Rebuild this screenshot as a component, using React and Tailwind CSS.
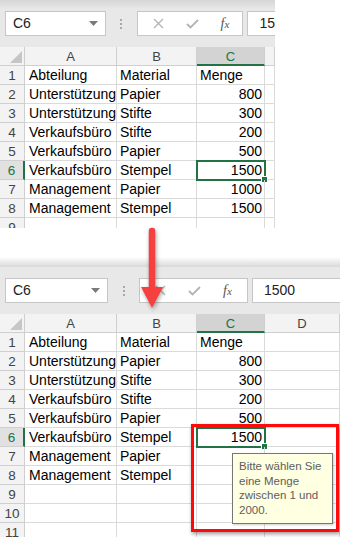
import React from 'react';

const ROWS = [
  ['Abteilung', 'Material', 'Menge'],
  ['Unterstützung', 'Papier', '800'],
  ['Unterstützung', 'Stifte', '300'],
  ['Verkaufsbüro', 'Stifte', '200'],
  ['Verkaufsbüro', 'Papier', '500'],
  ['Verkaufsbüro', 'Stempel', '1500'],
  ['Management', 'Papier', '1000'],
  ['Management', 'Stempel', '1500'],
];

const font = { fontFamily: '"Liberation Sans", Arial, sans-serif' };

const Toolbar = ({ value, top }) => (
  <div className={`h-[47px] relative flex items-start pt-[11px] ${top ? 'bg-[linear-gradient(to_bottom,#d6d6d6,#e8e8e8_9px)]' : 'bg-[#e8e8e8]'}`}>
    {/* name box */}
    <div className="ml-[5px] w-[103px] h-[25px] bg-white border border-[#c6c6c6] flex items-center justify-between pl-[7px] pr-[7px]">
      <span className="text-[14px] text-[#222]">C6</span>
      <svg width="9" height="5" viewBox="0 0 9 5"><polygon points="0,0 9,0 4.5,5" fill="#7a7a7a" /></svg>
    </div>
    {/* dots */}
    <div className="w-[31px] h-[25px] flex flex-col items-center justify-center gap-[2px]">
      <span className="w-[2px] h-[2px] bg-[#a8a8a8]" />
      <span className="w-[2px] h-[2px] bg-[#a8a8a8]" />
      <span className="w-[2px] h-[2px] bg-[#a8a8a8]" />
    </div>
    {/* cancel / enter / fx */}
    <div className="w-[109px] h-[25px] bg-white border border-[#c6c6c6] flex items-center">
      <svg className="ml-[15px]" width="11" height="11" viewBox="0 0 11 11">
        <path d="M1 1 L10 10 M10 1 L1 10" stroke="#b4b4b4" strokeWidth="1.3" />
      </svg>
      <svg className="ml-[22px]" width="13" height="10" viewBox="0 0 13 10">
        <path d="M1 5 L4.5 8.5 L12 1" stroke="#b4b4b4" strokeWidth="1.8" fill="none" />
      </svg>
      <span className="ml-[22px] text-[14px] italic text-[#555]" style={{ fontFamily: '"Liberation Serif", serif' }}>f<span className="text-[11px]">x</span></span>
    </div>
    {/* formula input */}
    <div className="ml-[4px] flex-1 h-[25px] bg-white border border-r-0 border-[#c6c6c6] flex items-center pl-[11px]">
      <span className="text-[14px] text-[#222]">{value}</span>
    </div>
  </div>
);

const Sheet = ({ rows, showD, hideFrom }) => {
  const cell = 'h-[19px] border-r border-b border-[#dadada] text-[14px] leading-[19px] text-black whitespace-nowrap overflow-hidden';
  const head = 'h-[19px] border-r border-b border-[#cfcfcf] bg-[#f3f3f3] text-[13px] leading-[19px] text-[#444] text-center';
  const lines = [];
  for (let i = 0; i < rows; i++) lines.push(ROWS[i] || ['', '', '']);
  return (
    <div className="grid grid-cols-[25px_92px_80px_68px_1fr] bg-white">
      <div className="h-[19px] border-r border-b border-[#cfcfcf] bg-[#f3f3f3] flex items-end justify-end p-[2px]">
        <svg width="12" height="12" viewBox="0 0 12 12"><polygon points="12,0 12,12 0,12" fill="#c6c6c6" /></svg>
      </div>
      <div className={head}>A</div>
      <div className={head}>B</div>
      <div className="h-[19px] border-r border-[#cfcfcf] border-b-2 border-b-[#217346] bg-[#d3d3d3] text-[13px] leading-[19px] text-[#217346] text-center">C</div>
      <div className={head}>{showD ? 'D' : ''}</div>
      {lines.map((r, i) => {
        const sel = i === 5;
        const num = /^\d+$/.test(r[2]);
        const val = hideFrom && i >= hideFrom ? '' : r[2];
        return (
          <React.Fragment key={i}>
            <div className={`h-[19px] border-b border-[#cfcfcf] text-[13.5px] leading-[19px] text-center ${sel ? 'bg-[#e1e1e1] text-[#217346] border-r-2 border-r-[#217346]' : 'bg-[#f3f3f3] text-[#444] border-r'}`}>{i + 1}</div>
            <div className={`${cell} pl-[4px]`}>{r[0]}</div>
            <div className={`${cell} pl-[3px]`}>{r[1]}</div>
            <div className={`${cell} relative overflow-visible ${num ? 'pr-[2px] text-right' : 'pl-[3px]'}`}>
              {val}
              {sel && (
                <>
                  <div className="absolute left-[-1px] top-[-1px] right-[-2px] bottom-[-2px] border-2 border-[#217346]" />
                  <div className="absolute right-[-4px] bottom-[-4px] w-[5px] h-[5px] bg-[#217346] border border-white box-content" />
                </>
              )}
            </div>
            <div className={cell} />
          </React.Fragment>
        );
      })}
    </div>
  );
};

export default function App() {
  return (
    <div className="w-[340px] h-[537px] relative overflow-hidden bg-white" style={font}>
      {/* before */}
      <div className="w-[275px] h-[228px] overflow-hidden">
        <Toolbar value="15" top />
        <Sheet rows={9} showD={false} />
      </div>

      {/* after */}
      <div className="mt-[29px]">
        <div className="h-[10px] bg-[linear-gradient(to_bottom,#ffffff,#d8d8d8)]" />
        <Toolbar value="1500" />
        <Sheet rows={11} showD hideFrom={6} />
      </div>

      {/* arrow */}
      <svg className="absolute left-[138px] top-[224px]" width="30" height="90" viewBox="0 0 30 90" style={{ filter: 'drop-shadow(1px 2px 2px rgba(0,0,0,0.35))' }}>
        <line x1="14" y1="7" x2="14" y2="66" stroke="#f5403f" strokeWidth="6.5" strokeLinecap="round" />
        <polygon points="3,63 25,63 14,84" fill="#f5403f" />
      </svg>

      {/* red highlight */}
      <div className="absolute left-[191px] top-[424px] w-[148px] h-[108px] border-[3px] border-[#ff0a0a] shadow-[1px_2px_4px_rgba(0,0,0,0.4)]" />

      {/* input message */}
      <div className="absolute left-[232px] top-[453px] w-[101px] h-[71px] bg-[#ffffe1] border border-[#767676] pl-[6px] pt-[5px] text-[11.5px] leading-[14.5px] text-[#5e5e5e] shadow-[1px_1px_2px_rgba(0,0,0,0.2)]">
        Bitte wählen Sie<br />eine Menge<br />zwischen 1 und<br />2000.
      </div>
    </div>
  );
}
